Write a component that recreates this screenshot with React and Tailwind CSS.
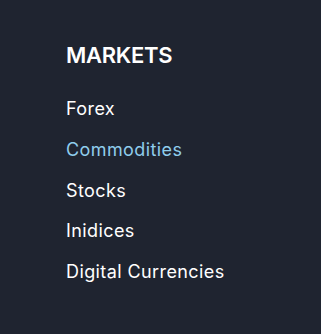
const LINKS = [
  { label: "Forex" },
  { label: "Commodities", active: true },
  { label: "Stocks" },
  { label: "Inidices" },
  { label: "Digital Currencies" },
];

export default function App() {
  return (
    <div
      className="w-[321px] h-[334px] bg-[#1f2430] pl-[66px] pt-[42px]"
      style={{ fontFamily: "Inter, 'Noto Sans', sans-serif" }}
    >
      <h2 className="text-[22px] leading-[26px] font-semibold text-white tracking-[-0.3px]">
        MARKETS
      </h2>
      <ul className="mt-[30px] flex flex-col gap-[19.75px]">
        {LINKS.map((l) => (
          <li
            key={l.label}
            className={`text-[18px] leading-[21px] tracking-[0.4px] ${l.active ? "text-[#8fcdec]" : "text-white"}`}
          >
            {l.label}
          </li>
        ))}
      </ul>
    </div>
  );
}
